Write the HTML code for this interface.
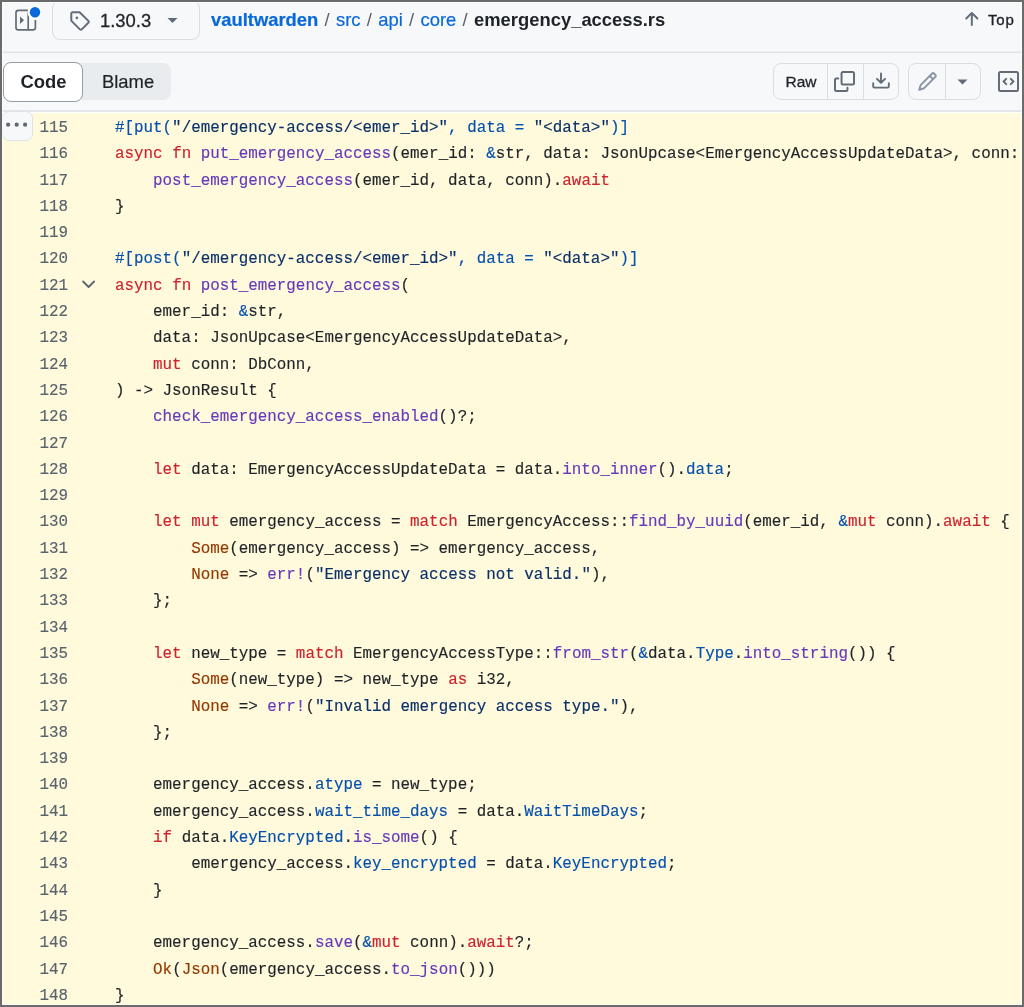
<!DOCTYPE html>
<html><head><meta charset="utf-8">
<style>
*{box-sizing:border-box;margin:0;padding:0}
body{will-change:transform}html,body{width:1024px;height:1007px;overflow:hidden;background:#f6f8fa;font-family:"Liberation Sans",sans-serif;color:#1f2328}
#frame{position:absolute;left:0;top:0;width:1024px;height:1007px;border:2px solid #6b6b6b;z-index:50;pointer-events:none}
#inner{position:absolute;left:2px;top:2px;width:1020px;height:1003px;border:1px solid rgba(255,255,255,0.65);z-index:49;pointer-events:none}
.abs{position:absolute}
#hdrline{position:absolute;left:0;top:52px;width:1024px;height:1px;background:#dde1e6;box-shadow:0 -1px 0 #edf0f2}
#tbline{position:absolute;left:0;top:110px;width:1024px;height:2px;background:#e3e7eb}#tbwhite{position:absolute;left:0;top:112px;width:1024px;height:1px;background:#fff}
#code{position:absolute;left:0;top:113px;width:1024px;height:900px;background:#fffadc}
.tagbtn{position:absolute;left:52px;top:0px;width:148px;height:40px;border:1px solid #d8dee4;border-radius:8px;background:#f6f8fa}
.crumb{position:absolute;left:211px;top:8px;font-size:18.4px;line-height:24px;white-space:nowrap}
.crumb .lk{color:#0969da;text-decoration:none;-webkit-text-stroke:0.2px #0969da}
.crumb .sep{color:#59636e;padding:0 6.3px}
.crumb b{font-weight:bold}
.top{position:absolute;left:988px;top:9.6px;font-size:15px;letter-spacing:0.8px;line-height:20px;color:#1f2328;-webkit-text-stroke:0.35px #1f2328}
.seg{position:absolute;left:3px;top:63px;width:168px;height:37px;background:#e9ecef;border-radius:8px}
.seg .on{position:absolute;left:0;top:-1px;width:80.3px;height:39.8px;background:#fff;border:1px solid #959da5;border-radius:8px}
.seg .t1{position:absolute;left:17.5px;top:8.5px;font-size:18.4px;font-weight:bold;line-height:20px}
.seg .t2{position:absolute;left:99px;top:8.5px;font-size:18.4px;line-height:20px;color:#1f2328;-webkit-text-stroke:0.2px #1f2328}
.grp{position:absolute;border:1px solid #d8dee4;border-radius:8px;background:#f6f8fa}
.div{position:absolute;top:0;width:1px;height:100%;background:#d8dee4}
.raw{position:absolute;left:11.5px;top:8px;font-size:15.5px;line-height:20px;color:#1f2328;-webkit-text-stroke:0.3px #1f2328}
.lines{position:absolute;left:0;top:2px;width:1024px;display:grid;grid-template-columns:68px 1fr}
.ln{font-family:"Liberation Mono",monospace;font-size:15.86px;line-height:26.3px;height:26.3px;color:#59636e;-webkit-text-stroke:0.15px;text-align:right;white-space:pre}
.lc{font-family:"Liberation Mono",monospace;font-size:15.86px;line-height:26.3px;height:26.3px;color:#1f2328;white-space:pre;padding-left:47px;overflow:hidden;-webkit-text-stroke:0.15px}
.k{color:#cf222e}.f{color:#6639ba}.c{color:#0550ae}.s{color:#0a3069}.t{color:#953800}
.expand{position:absolute;left:2px;top:111px;width:31px;height:30px;background:#f6f8fa;border:1px solid #dfe3e8;border-radius:7px;z-index:5}
</style></head><body>
<div id="frame"></div><div id="inner"></div>

<!-- side panel icon -->
<svg class="abs" style="left:13px;top:7px" width="28" height="28" viewBox="0 0 28 28">
 <rect x="3" y="3.3" width="19.4" height="19.6" rx="2.4" fill="none" stroke="#636c76" stroke-width="1.7"/>
 <line x1="15.2" y1="3.3" x2="15.2" y2="22.9" stroke="#636c76" stroke-width="1.7"/>
 <path d="M7 9.4 L11 13.2 L7 17 Z" fill="#636c76"/>
 <circle cx="22" cy="5.3" r="7.6" fill="#ffffff"/>
 <circle cx="22" cy="5.3" r="5.2" fill="#0969da"/>
</svg>

<div class="tagbtn"></div>
<svg class="abs" style="left:68.7px;top:10px" width="21" height="21" viewBox="0 0 16 16">
 <path fill="#636c76" d="M1 7.775V2.75C1 1.784 1.784 1 2.75 1h5.025c.464 0 .91.184 1.238.513l6.25 6.25a1.75 1.75 0 0 1 0 2.474l-5.026 5.026a1.75 1.75 0 0 1-2.474 0l-6.25-6.25A1.752 1.752 0 0 1 1 7.775Zm1.5 0c0 .066.026.13.073.177l6.25 6.25a.25.25 0 0 0 .354 0l5.025-5.025a.25.25 0 0 0 0-.354l-6.25-6.25a.25.25 0 0 0-.177-.073H2.75a.25.25 0 0 0-.25.25ZM6 5a1 1 0 1 1 0 2 1 1 0 0 1 0-2Z"/>
</svg>
<div class="abs" style="left:100px;top:9px;font-size:18.4px;line-height:24px;color:#1f2328;-webkit-text-stroke:0.3px #1f2328">1.30.3</div>
<svg class="abs" style="left:166px;top:16.3px" width="13" height="9" viewBox="0 0 13 9"><path d="M1.5 2 L11.5 2 L6.5 7 Z" fill="#636c76"/></svg>

<div class="crumb"><span class="lk"><b>vaultwarden</b></span><span class="sep">/</span><span class="lk">src</span><span class="sep">/</span><span class="lk">api</span><span class="sep">/</span><span class="lk">core</span><span class="sep">/</span><b>emergency_access.rs</b></div>

<svg class="abs" style="left:961px;top:8.9px" width="21" height="21" viewBox="0 0 16 16"><path fill="#636c76" d="M3.47 7.78a.75.75 0 0 1 0-1.06l4.25-4.25a.75.75 0 0 1 1.06 0l4.25 4.25a.751.751 0 0 1-.018 1.042.751.751 0 0 1-1.042.018L9 4.81v7.44a.75.75 0 0 1-1.5 0V4.81L4.53 7.78a.75.75 0 0 1-1.06 0Z"/></svg>
<div class="top">Top</div>

<div id="hdrline"></div>

<div class="seg"><div class="on"></div><div class="t1">Code</div><div class="t2">Blame</div></div>

<div class="grp" style="left:773px;top:63px;width:126px;height:37px">
 <div class="div" style="left:53px"></div><div class="div" style="left:89px"></div>
 <div class="raw">Raw</div>
</div>
<svg class="abs" style="left:834px;top:71px" width="21" height="21" viewBox="0 0 16 16"><path fill="#636c76" d="M0 6.75C0 5.784.784 5 1.75 5h1.5a.75.75 0 0 1 0 1.5h-1.5a.25.25 0 0 0-.25.25v7.5c0 .138.112.25.25.25h7.5a.25.25 0 0 0 .25-.25v-1.5a.75.75 0 0 1 1.5 0v1.5A1.75 1.75 0 0 1 9.25 16h-7.5A1.75 1.75 0 0 1 0 14.25Z"/><path fill="#636c76" d="M5 1.75C5 .784 5.784 0 6.75 0h7.5C15.216 0 16 .784 16 1.75v7.5A1.75 1.75 0 0 1 14.25 11h-7.5A1.75 1.75 0 0 1 5 9.25Zm1.75-.25a.25.25 0 0 0-.25.25v7.5c0 .138.112.25.25.25h7.5a.25.25 0 0 0 .25-.25v-7.5a.25.25 0 0 0-.25-.25Z"/></svg>
<svg class="abs" style="left:871px;top:71px" width="20" height="20" viewBox="0 0 16 16"><path fill="#636c76" d="M2.75 14A1.75 1.75 0 0 1 1 12.25v-2.5a.75.75 0 0 1 1.5 0v2.5c0 .138.112.25.25.25h10.5a.25.25 0 0 0 .25-.25v-2.5a.75.75 0 0 1 1.5 0v2.5A1.75 1.75 0 0 1 13.25 14Z"/><path fill="#636c76" d="M7.25 7.689V2a.75.75 0 0 1 1.5 0v5.689l1.97-1.969a.749.749 0 1 1 1.06 1.06l-3.25 3.25a.749.749 0 0 1-1.06 0L4.22 6.78a.749.749 0 1 1 1.06-1.06l1.97 1.969Z"/></svg>

<div class="grp" style="left:908px;top:63px;width:73px;height:37px">
 <div class="div" style="left:35.5px"></div>
</div>
<svg class="abs" style="left:917px;top:71px" width="21" height="21" viewBox="0 0 16 16"><path fill="#8a96a3" d="M11.013 1.427a1.75 1.75 0 0 1 2.474 0l1.086 1.086a1.75 1.75 0 0 1 0 2.474l-8.61 8.61c-.21.21-.47.364-.756.445l-3.251.93a.75.75 0 0 1-.927-.928l.929-3.25c.081-.286.235-.547.445-.758l8.61-8.61Zm.176 4.823L9.75 4.81l-6.286 6.287a.253.253 0 0 0-.064.108l-.558 1.953 1.953-.558a.253.253 0 0 0 .108-.064Zm1.238-3.763a.25.25 0 0 0-.354 0L10.811 3.75l1.439 1.44 1.263-1.263a.25.25 0 0 0 0-.354Z"/></svg>
<svg class="abs" style="left:956px;top:78px" width="13" height="9" viewBox="0 0 13 9"><path d="M1.5 1.5 L11.5 1.5 L6.5 6.5 Z" fill="#636c76"/></svg>

<svg class="abs" style="left:997.5px;top:70.5px" width="21" height="21" viewBox="0 0 16 16"><path fill="#636c76" d="M0 1.75C0 .784.784 0 1.75 0h12.5C15.216 0 16 .784 16 1.75v12.5A1.75 1.75 0 0 1 14.25 16H1.75A1.75 1.75 0 0 1 0 14.25Zm1.75-.25a.25.25 0 0 0-.25.25v12.5c0 .138.112.25.25.25h12.5a.25.25 0 0 0 .25-.25V1.75a.25.25 0 0 0-.25-.25Zm7.47 3.97a.75.75 0 0 1 1.06 0l2 2a.75.75 0 0 1 0 1.06l-2 2a.749.749 0 0 1-1.275-.326.749.749 0 0 1 .215-.734L10.69 8 9.22 6.53a.75.75 0 0 1 0-1.06ZM6.78 6.53 5.31 8l1.47 1.47a.749.749 0 0 1-.326 1.275.749.749 0 0 1-.734-.215l-2-2a.75.75 0 0 1 0-1.06l2-2a.751.751 0 0 1 1.042.018.751.751 0 0 1 .018 1.042Z"/></svg>

<div id="tbline"></div><div id="tbwhite"></div>
<div id="code">
 <div class="lines">
<div class="ln">115</div><div class="lc"><span class="c">#[put(</span><span class="s">&quot;/emergency-access/&lt;emer_id&gt;&quot;</span><span class="c">, data = </span><span class="s">&quot;&lt;data&gt;&quot;</span><span class="c">)]</span></div>
<div class="ln">116</div><div class="lc"><span class="k">async</span> <span class="k">fn</span> <span class="f">put_emergency_access</span>(emer_id: <span class="c">&amp;</span>str, data: JsonUpcase&lt;EmergencyAccessUpdateData&gt;, conn: DbConn) -&gt; JsonResult {</div>
<div class="ln">117</div><div class="lc">    <span class="f">post_emergency_access</span>(emer_id, data, conn).<span class="k">await</span></div>
<div class="ln">118</div><div class="lc">}</div>
<div class="ln">119</div><div class="lc"></div>
<div class="ln">120</div><div class="lc"><span class="c">#[post(</span><span class="s">&quot;/emergency-access/&lt;emer_id&gt;&quot;</span><span class="c">, data = </span><span class="s">&quot;&lt;data&gt;&quot;</span><span class="c">)]</span></div>
<div class="ln">121</div><div class="lc"><span class="k">async</span> <span class="k">fn</span> <span class="f">post_emergency_access</span>(</div>
<div class="ln">122</div><div class="lc">    emer_id: <span class="c">&amp;</span>str,</div>
<div class="ln">123</div><div class="lc">    data: JsonUpcase&lt;EmergencyAccessUpdateData&gt;,</div>
<div class="ln">124</div><div class="lc">    <span class="k">mut</span> conn: DbConn,</div>
<div class="ln">125</div><div class="lc">) -&gt; JsonResult {</div>
<div class="ln">126</div><div class="lc">    <span class="f">check_emergency_access_enabled</span>()?;</div>
<div class="ln">127</div><div class="lc"></div>
<div class="ln">128</div><div class="lc">    <span class="k">let</span> data: EmergencyAccessUpdateData = data.<span class="f">into_inner</span>().<span class="c">data</span>;</div>
<div class="ln">129</div><div class="lc"></div>
<div class="ln">130</div><div class="lc">    <span class="k">let</span> <span class="k">mut</span> emergency_access = <span class="k">match</span> EmergencyAccess::<span class="f">find_by_uuid</span>(emer_id, <span class="c">&amp;</span><span class="k">mut</span> conn).<span class="k">await</span> {</div>
<div class="ln">131</div><div class="lc">        <span class="t">Some</span>(emergency_access) =&gt; emergency_access,</div>
<div class="ln">132</div><div class="lc">        <span class="t">None</span> =&gt; <span class="f">err!</span>(<span class="s">&quot;Emergency access not valid.&quot;</span>),</div>
<div class="ln">133</div><div class="lc">    };</div>
<div class="ln">134</div><div class="lc"></div>
<div class="ln">135</div><div class="lc">    <span class="k">let</span> new_type = <span class="k">match</span> EmergencyAccessType::<span class="f">from_str</span>(<span class="c">&amp;</span>data.<span class="c">Type</span>.<span class="f">into_string</span>()) {</div>
<div class="ln">136</div><div class="lc">        <span class="t">Some</span>(new_type) =&gt; new_type <span class="k">as</span> i32,</div>
<div class="ln">137</div><div class="lc">        <span class="t">None</span> =&gt; <span class="f">err!</span>(<span class="s">&quot;Invalid emergency access type.&quot;</span>),</div>
<div class="ln">138</div><div class="lc">    };</div>
<div class="ln">139</div><div class="lc"></div>
<div class="ln">140</div><div class="lc">    emergency_access.<span class="c">atype</span> = new_type;</div>
<div class="ln">141</div><div class="lc">    emergency_access.<span class="c">wait_time_days</span> = data.<span class="c">WaitTimeDays</span>;</div>
<div class="ln">142</div><div class="lc">    <span class="k">if</span> data.<span class="c">KeyEncrypted</span>.<span class="f">is_some</span>() {</div>
<div class="ln">143</div><div class="lc">        emergency_access.<span class="c">key_encrypted</span> = data.<span class="c">KeyEncrypted</span>;</div>
<div class="ln">144</div><div class="lc">    }</div>
<div class="ln">145</div><div class="lc"></div>
<div class="ln">146</div><div class="lc">    emergency_access.<span class="f">save</span>(<span class="c">&amp;</span><span class="k">mut</span> conn).<span class="k">await</span>?;</div>
<div class="ln">147</div><div class="lc">    <span class="t">Ok</span>(<span class="t">Json</span>(emergency_access.<span class="f">to_json</span>()))</div>
<div class="ln">148</div><div class="lc">}</div>
 </div>
</div>
<div class="expand"></div>
<svg class="abs" style="left:0;top:112px;z-index:6" width="34" height="30" viewBox="0 0 34 30"><circle cx="8.1" cy="12.65" r="2.1" fill="#5f6873"/><circle cx="16.7" cy="12.65" r="2.1" fill="#5f6873"/><circle cx="25.1" cy="12.65" r="2.1" fill="#5f6873"/></svg>
<svg class="abs" style="left:80px;top:276.5px" width="17" height="15" viewBox="0 0 17 15"><path d="M3.1 4.5 L8.6 10.0 L14.1 4.5" fill="none" stroke="#59636e" stroke-width="1.8" stroke-linecap="round" stroke-linejoin="round"/></svg>
</body></html>
